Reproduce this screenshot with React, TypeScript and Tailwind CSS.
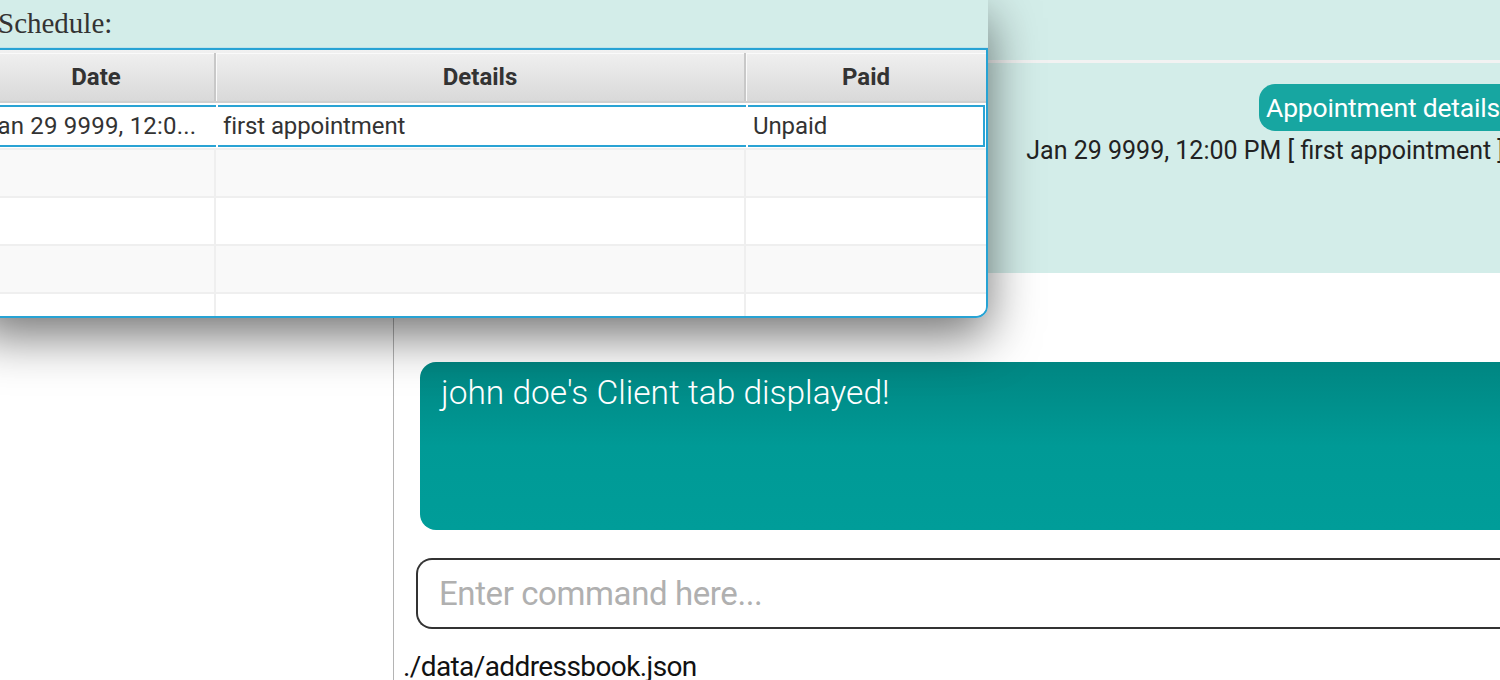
import React from "react";

type Row = { date: string; details: string; paid: string };

const rows: Row[] = [
    { date: "Jan 29 9999, 12:0...", details: "first appointment", paid: "Unpaid" },
    { date: "", details: "", paid: "" },
    { date: "", details: "", paid: "" },
    { date: "", details: "", paid: "" },
    { date: "", details: "", paid: "" },
];

function ScheduleWindow() {
    return (
        <div className="absolute left-[-24px] top-0 w-[1012px] h-[318px] flex flex-col rounded-br-[12px] shadow-[0_18px_50px_rgba(0,0,0,0.55)] z-10">
            <div className="h-[48px] shrink-0 bg-[#d3ede9] pl-[22px] pt-[2px] border-b border-[#bfe3ea]">
                <span className="font-['Liberation_Serif',serif] text-[29px] text-[#333]">Schedule:</span>
            </div>
            <div className="flex-1 min-h-0 flex flex-col bg-white border-2 border-[#27a3d4] rounded-br-[12px] overflow-hidden font-['Roboto',sans-serif] text-[#333]">
                <div className="flex h-[53px] shrink-0 pt-[3px] border-b-2 border-[#cfcfcf] bg-gradient-to-b from-[#f1f1f1] to-[#d9d9d9] text-[24px] font-bold">
                    <div className="w-[238px] flex items-center justify-center border-r-2 border-[#c8c8c8] shadow-[inset_1px_1px_0_#fafafa]">Date</div>
                    <div className="w-[530px] flex items-center justify-center border-r-2 border-[#c8c8c8] shadow-[inset_1px_1px_0_#fafafa]">Details</div>
                    <div className="flex-1 flex items-center justify-center shadow-[inset_1px_1px_0_#fafafa]">Paid</div>
                </div>
                {rows.map((row, i) =>
                    i === 0 ? (
                        <div key={i} className="h-[47px] shrink-0 bg-white pt-[2px] pb-[1px] border-b-2 border-[#efefef]">
                            <div className="flex h-full text-[24px] tracking-[-0.1px]">
                                <div className="w-[238px] flex items-center pl-[6px] border-y-2 border-[#2aa3d4] mr-[2px] whitespace-nowrap tracking-[0.2px]">{row.date}</div>
                                <div className="w-[528px] flex items-center pl-[5px] border-y-2 border-[#2aa3d4] mr-[2px]">{row.details}</div>
                                <div className="flex-1 flex items-center pl-[5px] border-y-2 border-r-2 border-[#2aa3d4] mr-[1px]">{row.paid}</div>
                            </div>
                        </div>
                    ) : (
                        <div
                            key={i}
                            className={
                                "h-[48px] shrink-0 flex border-b-2 border-[#efefef] " +
                                (i % 2 === 1 ? "bg-[#f9f9f9]" : "bg-white")
                            }
                        >
                            <div className="w-[238px] border-r-2 border-[#efefef]" />
                            <div className="w-[530px] border-r-2 border-[#efefef]" />
                            <div className="flex-1" />
                        </div>
                    ),
                )}
            </div>
        </div>
    );
}

function MainWindow() {
    return (
        <div className="flex-1 min-w-0 flex flex-col border-l border-[#b4b4b4] bg-white font-['Roboto',sans-serif]">
            <div className="h-[60px] shrink-0 bg-[#d3ede9]" />
            <div className="h-[3px] shrink-0 bg-[#f2f2f2]" />
            <div className="h-[210px] shrink-0 bg-[#d3ede9] flex flex-col items-end pt-[21px] mr-[-14px]">
                <div className="h-[47px] flex items-center rounded-[16px] bg-[#17a6a1] pl-[7px] pr-[14px] text-[26.5px] text-white tracking-[-0.2px] whitespace-nowrap">
                    Appointment details
                </div>
                <div className="mt-[5px] mr-[10px] text-[25px] leading-[30px] text-[#222] whitespace-nowrap">
                    Jan 29 9999, 12:00 PM [ first appointment ]
                </div>
            </div>
            <div className="h-[89px] shrink-0" />
            <div className="h-[168px] shrink-0 ml-[26px] rounded-l-[16px] bg-gradient-to-b from-[#008682] via-[#009a96] to-[#009d99] pl-[21px] pt-[6px]">
                <span className="text-[33.5px] font-light text-white whitespace-nowrap">
                    john doe's Client tab displayed!
                </span>
            </div>
            <div className="h-[28px] shrink-0" />
            <div className="h-[71px] shrink-0 ml-[22px] flex items-center rounded-l-[16px] border-2 border-r-0 border-[#333] pl-[21px]">
                <span className="text-[33px] text-[#b0b0b0] tracking-[-0.4px] whitespace-nowrap">Enter command here...</span>
            </div>
            <div className="ml-[9px] mt-[22px] text-[28px] leading-[32px] text-[#111] tracking-[-0.6px] whitespace-nowrap">
                ./data/addressbook.json
            </div>
        </div>
    );
}

export default function App() {
    return (
        <div className="relative w-[1500px] h-[680px] overflow-hidden bg-white flex">
            <div className="w-[393px] shrink-0 bg-white" />
            <MainWindow />
            <ScheduleWindow />
        </div>
    );
}
